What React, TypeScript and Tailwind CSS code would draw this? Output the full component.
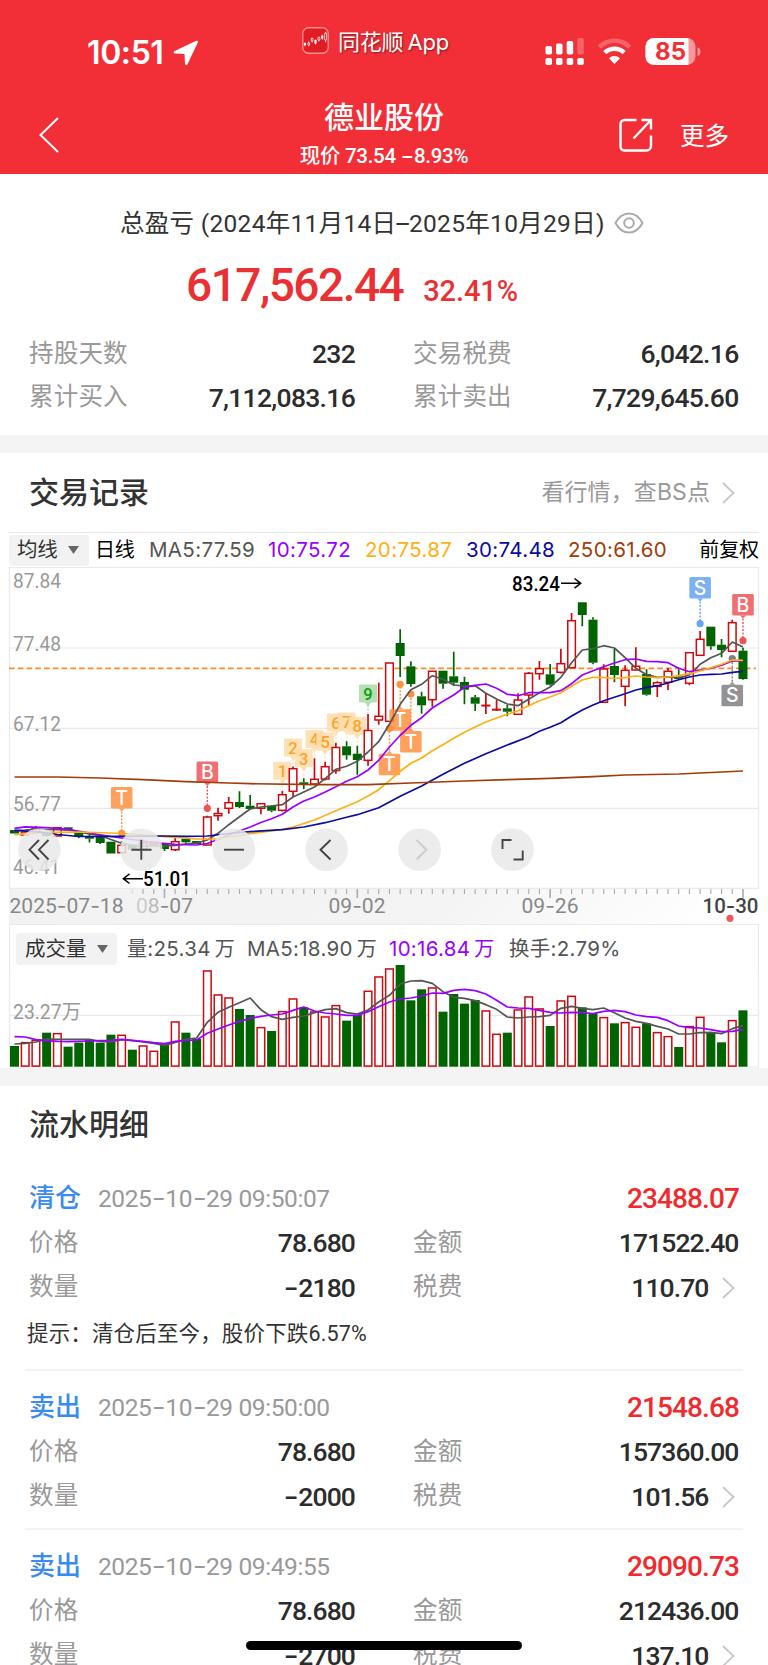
import type { ReactNode } from "react";
import { clsx } from "clsx";

const SANS = "font-['Inter','Noto_Sans_CJK_SC',sans-serif]";
const DIN = "font-['Roboto','Noto_Sans_CJK_SC',sans-serif]";

const RED = "#cc0a0f";
const GREEN = "#006400";
const GRAY = "#555555";
const PURPLE = "#9900ff";
const ORANGE = "#ffb010";
const NAVY = "#0c0ca0";
const BROWN = "#a23c0a";

/** x of the i-th trading day */
const px = (i: number) => 14.5 + i * 10.713;

/** up, body top, body bottom, high, low */
type Candle = [number, number, number, number, number];

const CANDLES: Candle[] = [
  [0, 830, 833.5, 830, 833.5], [1, 832, 835, 832, 835], [1, 828, 832, 826, 833],
  [0, 832, 836, 831, 836.5], [1, 827.7, 836, 827.7, 836], [0, 827.3, 830.5, 827.3, 830.5],
  [0, 833, 837, 833, 838], [0, 836.7, 838.7, 834, 842.5], [0, 836.7, 843, 836, 844],
  [0, 841.7, 853.5, 841.7, 853.5], [1, 845.3, 852.7, 841, 852.7], [0, 844.7, 849.7, 844, 851],
  [1, 843, 849, 843, 849], [1, 842.3, 844.3, 842, 846], [0, 843.3, 849, 843.3, 851],
  [1, 841.7, 849.7, 837.7, 851], [0, 839, 842.3, 839, 844], [0, 841, 844, 841, 844],
  [1, 817, 845, 815.7, 845], [1, 813.5, 815.7, 807.7, 820.7], [1, 802.7, 808.3, 797, 813.7],
  [0, 802, 807, 791.3, 808], [0, 805.7, 809, 795, 809.7], [1, 803.7, 808.3, 803, 814.3],
  [0, 805.7, 810.7, 805, 812.3], [1, 794.7, 810.3, 791, 811.5], [1, 768.7, 791.3, 766.5, 797],
  [0, 782.3, 784, 778.3, 789], [1, 779.3, 784, 758.3, 784], [1, 766.7, 779, 761.7, 780.5],
  [1, 747.5, 770.5, 743, 773.7], [0, 746.3, 755.3, 741.3, 759.7], [0, 753.7, 760, 745.7, 774.7],
  [1, 730.5, 760.3, 714, 765.7], [1, 716.3, 720, 682.7, 724.7], [1, 663, 721.3, 663, 721.5],
  [0, 643, 656, 629.3, 677], [0, 666.3, 684, 661.3, 686.7], [0, 696.3, 705.3, 691.7, 713.7],
  [1, 671.3, 699.7, 671, 706.7], [0, 670.7, 683.7, 670.7, 688.7], [0, 676.3, 682.7, 651.7, 686],
  [0, 682, 689.7, 676.7, 704.3], [0, 697.3, 703.7, 695, 711], [1, 705.3, 705.8, 693, 714],
  [1, 709.4, 709.9, 700, 711], [0, 708.3, 711.7, 705, 716.3], [1, 700, 714.3, 693.3, 714.5],
  [1, 673.3, 695, 672, 706], [1, 668.7, 673.7, 661, 679.7], [0, 674.3, 684.7, 664, 685.5],
  [1, 663.7, 672.3, 648.7, 673.5], [1, 620.7, 667.7, 613, 667.7], [0, 602.3, 615, 602.3, 626.3],
  [0, 619.7, 662.7, 617.3, 664.3], [1, 669, 702.3, 664.3, 703], [0, 666, 675, 648.7, 682.3],
  [1, 670.3, 686.3, 665.3, 706.3], [1, 666.3, 670, 647.3, 670], [0, 674, 694.7, 669.3, 695.7],
  [1, 682.7, 686.3, 681.3, 697], [1, 671.3, 682.3, 668, 690], [0, 676.7, 679, 669.3, 679],
  [1, 652.7, 683.3, 652, 685.3], [1, 639.3, 655.3, 631, 655.5], [0, 626.7, 646.3, 626.7, 649.7],
  [0, 644.7, 650, 639, 657.3], [1, 622.7, 651.3, 619.7, 651.5], [0, 650.7, 679, 647.7, 679.7],
];

type Point = [number, number];

const MA5: Point[] = [
  [0, 830.7], [1, 830], [2, 829], [3, 829.5], [5, 830], [6, 832], [7, 834], [8, 835.5], [9, 839.5],
  [10, 843.3], [11, 845.3], [12, 846], [14, 846], [15, 845.5], [16, 844], [17, 843], [18, 840],
  [19, 833.3], [20, 824.7], [21, 816.7], [22, 809], [23, 807], [24, 806], [25, 804.7], [26, 797],
  [27, 792], [28, 787], [29, 778.7], [30, 769.3], [31, 766.3], [32, 761.3], [33, 752], [34, 741.7],
  [35, 724], [36, 704.3], [37, 689.7], [38, 684.3], [39, 675.7], [40, 679.3], [41, 685], [42, 686],
  [43, 685.7], [44, 693.3], [45, 699], [46, 704], [47, 705.7], [48, 699.3], [49, 692.7], [50, 687],
  [51, 677.3], [52, 662.7], [53, 650], [54, 648.7], [55, 645.7], [56, 648], [57, 657.7], [58, 668.3],
  [59, 674.7], [60, 677.3], [61, 677], [62, 677.7], [63, 675], [64, 664.3], [65, 657.7], [66, 653.3],
  [67, 642], [68, 647],
];

const MA10: Point[] = [
  [0, 828.3], [1, 826.9], [3, 827.7], [5, 829.3], [7, 833], [9, 836.5], [11, 839.5], [13, 842.5],
  [15, 844.3], [17, 845], [18, 843.5], [19, 839.5], [20, 835], [21, 831], [22, 827], [23, 822.5],
  [24, 818.7], [25, 814.3], [26, 807], [27, 801], [28, 797], [29, 792], [30, 786.7], [31, 781.3],
  [32, 776.7], [33, 770], [34, 760.3], [35, 747], [36, 735.3], [37, 725.3], [38, 717.7], [39, 708],
  [40, 701.3], [41, 695], [42, 687.3], [43, 685.3], [44, 684], [45, 688.3], [46, 694.3], [47, 695.7],
  [48, 692.7], [50, 692.7], [51, 690.7], [52, 683.7], [53, 675], [54, 670.7], [55, 666.7], [56, 663],
  [57, 659.7], [58, 659], [59, 661.3], [60, 661.7], [61, 662.7], [62, 668.3], [63, 671.7], [64, 670],
  [65, 668.3], [66, 665.3], [67, 661], [68, 661],
];

const MA20: Point[] = [
  [0, 834.7], [3, 832.3], [6, 832], [9, 833], [11, 834], [14, 836.7], [17, 839], [19, 838.8],
  [21, 835.7], [22, 833.7], [24, 831], [25, 829.3], [26, 827], [28, 820], [30, 810.7], [32, 801.7],
  [33, 796], [34, 789.7], [35, 780.7], [36, 771.3], [37, 763.3], [38, 758], [39, 750.7], [40, 744.7],
  [41, 738.3], [42, 732.3], [43, 727], [44, 722], [45, 718], [46, 714.3], [47, 710.7], [48, 705.7],
  [49, 700.7], [50, 697], [51, 692.7], [52, 686], [53, 680], [54, 677.3], [55, 677.5], [56, 678.5],
  [57, 677.7], [58, 676], [59, 677], [60, 677.7], [61, 677], [62, 675.7], [63, 673.7], [64, 671],
  [65, 667.7], [66, 664.3], [67, 660], [68, 660.3],
];

const MA30: Point[] = [
  [0, 830.3], [2, 831.7], [4, 834.5], [6, 836.5], [10, 836.3], [14, 836], [16, 836.3], [18, 836],
  [20, 833.5], [22, 831.7], [25, 829.7], [27, 827], [29, 822.7], [31, 817.3], [32, 814.7],
  [33, 811.3], [34, 807.7], [36, 796.3], [38, 786], [40, 774.3], [42, 763.3], [44, 753.7],
  [46, 745], [48, 736.7], [49, 731.3], [50, 727.3], [51, 722.7], [52, 716], [53, 710], [54, 705],
  [55, 700.7], [56, 697.3], [57, 693.7], [58, 690], [59, 687.7], [60, 685.7], [61, 683], [62, 679.7],
  [63, 677], [64, 675], [65, 674.3], [66, 674], [67, 672.3], [68, 671.3],
];

const MA250: Point[] = [
  [0, 777], [4, 777], [8, 778], [12, 779.7], [16, 781.7], [20, 783], [22, 783.7], [28, 784.7],
  [33, 784.7], [37, 783], [42, 781], [46, 779.7], [50, 778.3], [54, 776.7], [57, 775], [62, 774],
  [66, 772], [68, 771],
];

// volume series are kept at 3x device pixels, measured from y = 900
const VOLUMES = [
  438, 427, 420, 398, 400, 440, 428, 420, 428, 404, 405, 449, 437, 453, 432, 365, 398, 417, 212, 284,
  293, 327, 345, 382, 393, 334, 296, 322, 335, 350, 316, 362, 344, 273, 230, 206, 195, 301, 268, 263,
  335, 282, 311, 300, 332, 402, 398, 329, 290, 326, 378, 302, 288, 322, 340, 352, 370, 367, 381, 370,
  397, 409, 441, 379, 351, 397, 427, 361, 331,
];
const VOL_MA5 = [
  432, 430, 426, 417, 418, 418, 418, 418, 424, 426, 419, 422, 426, 430, 436, 427, 418, 414, 367, 337,
  322, 308, 294, 329, 350, 358, 352, 348, 338, 329, 326, 338, 342, 330, 306, 286, 252, 243, 242, 250,
  275, 292, 295, 302, 314, 328, 351, 354, 351, 350, 346, 325, 319, 325, 329, 324, 338, 354, 364, 370,
  379, 387, 402, 402, 398, 397, 401, 386, 377,
];
const VOL_MA10 = [
  410, 411, 419, 422, 424, 425, 424, 423, 422, 421, 418, 421, 424, 428, 431, 424, 421, 420, 400, 387,
  375, 364, 355, 349, 345, 342, 331, 321, 333, 339, 342, 346, 346, 335, 320, 306, 297, 294, 288, 279,
  280, 271, 268, 272, 282, 301, 321, 324, 325, 331, 337, 339, 337, 338, 341, 334, 331, 335, 345, 350,
  352, 362, 378, 383, 384, 389, 395, 394, 388,
];
const volY = (v: number) => 900 + v / 3;

/** day, letter, colour, box top, dot y */
const MARKS: [number, string, string, number, number][] = [
  [10, "T", "#ff9040", 787, 833.3],
  [18, "B", "#ee5558", 761.5, 808.3],
  [35, "T", "#ff9040", 753.7, 728.3],
  [36, "T", "#ff9040", 709.3, 684.3],
  [37, "T", "#ff9040", 731, 694],
  [64, "S", "#66a5f0", 577, 623.7],
  [67, "S", "#808080", 684.7, 658.5],
  [68, "B", "#ee5558", 594, 640.7],
];

/** day, label, box top, stem end */
const COUNTS: [number, string, number, number][] = [
  [25, "1", 762.3, 791], [26, "2", 739, 766], [27, "3", 749.7, 778], [28, "4", 730.3, 758],
  [29, "5", 733, 761], [30, "6", 714, 743], [31, "7", 713, 741], [32, "8", 717.3, 745],
  [33, "9", 685, 713],
];

function toLine(points: Point[]) {
  return points.map(([i, y]) => `${px(i).toFixed(1)},${y}`).join(" ");
}

/** Digits in Roboto, with a wider hyphen between them */
function Num({ children }: { children: string }) {
  return (
    <>
      {children.split(/(-)/).map((part, i) =>
        part === "-" ? (
          <span key={i} className="mx-[1.5px] inline-block scale-x-125 font-['Inter']">-</span>
        ) : (
          part
        )
      )}
    </>
  );
}

function SvgText({
  x,
  y,
  w,
  size = 20.5,
  fill = "#999",
  weight = 400,
  children,
}: {
  x: number;
  y: number;
  w: number;
  size?: number;
  fill?: string;
  weight?: number;
  children: ReactNode;
}) {
  return (
    <text x={x} y={y} textLength={w} lengthAdjust="spacingAndGlyphs" fontSize={size} fill={fill} fontWeight={weight}>
      {children}
    </text>
  );
}

function Dash() {
  return <tspan className="font-['Inter']">-</tspan>;
}

function Chevron({ className }: { className?: string }) {
  return (
    <svg viewBox="0 0 13 22" className={clsx("h-[22px] w-[13px] shrink-0", className)} fill="none" stroke="#c8c8c8" strokeWidth="1.8">
      <path d="M1 1 L11.5 11 L1 21" />
    </svg>
  );
}

function StatusBar() {
  return (
    <div className="flex h-[92px] text-white">
      <div className="flex w-[302px] items-center pt-[14px] pl-[87px]">
        <span className="w-[80px] font-['Inter'] text-[32px] font-semibold tracking-[-0.4px]">10:51</span>
        <svg viewBox="0 0 26 26" className="ml-[6px] h-[26px] w-[26px]" fill="#fff">
          <path d="M23.2 .8 L1.2 11.2 Q-.4 12.6 1.5 13.4 L11.5 13.9 L12 24 Q13 26.2 14.4 24.4 L24.8 2.4 Q25.4 .2 23.2 .8Z" />
        </svg>
      </div>
      <div className="flex w-[243px] items-start pt-[27px]">
        <svg viewBox="0 0 28 28" className="h-[27px] w-[27px]" fill="none">
          <rect x=".8" y=".8" width="26.4" height="26.4" rx="6" fill="#e01c24" stroke="#ff8d90" strokeWidth="1.4" />
          <path d="M3 16v4M7 15v5M10.5 11v5M14 13v5M17.5 10v5M21 8v5M24.5 5v11" stroke="#fff" strokeWidth=".9" />
          <path d="M3 16.5v2.5M14 13.5v3.5M21 9v3" stroke="#fff" strokeWidth="2.2" />
          <path d="M6 16.5h2v2h-2zM9.5 12h2v2.5h-2zM16.5 11h2v2.5h-2zM23.5 6.5h2v7h-2z" fill="#e01c24" stroke="#fff" strokeWidth=".7" />
        </svg>
        <span className={clsx(SANS, "mt-px ml-[9px] text-[22px] leading-[28px] tracking-[-0.2px] whitespace-nowrap [text-shadow:1px_1px_2px_rgba(0,0,0,0.45)]")}>
          同花顺<span className="ml-1">App</span>
        </span>
      </div>
      <svg viewBox="545 36 160 32" className="mt-[36px] h-[32px] w-[160px]" fill="#fff">
        <rect x="545.5" y="46" width="6.5" height="8.5" rx="1.8" />
        <rect x="556" y="43.5" width="6.5" height="11" rx="1.8" />
        <rect x="566.7" y="41" width="6.5" height="13.5" rx="1.8" />
        <rect x="577.3" y="38" width="6.5" height="16.5" rx="1.8" opacity=".25" />
        <rect x="545.5" y="58" width="6.5" height="7" rx="1.8" />
        <rect x="556" y="58" width="6.5" height="7" rx="1.8" />
        <rect x="566.7" y="58" width="6.5" height="7" rx="1.8" />
        <rect x="577.3" y="58" width="6.5" height="7" rx="1.8" />
        <g fill="none" stroke="#fff" strokeWidth="4.6">
          <path d="M599.3 47a21.5 21.5 0 0 1 30.4 0" opacity=".25" />
          <path d="M604.8 52.6a14 14 0 0 1 19.4 0" />
        </g>
        <path d="M609 58.2a8 8 0 0 1 11 0L614.5 64z" />
        <rect x="645.5" y="38" width="50" height="27" rx="8.5" opacity=".5" />
        <path d="M654 38h34.500v27H654a8.500 8.500 0 0 1-8.500-8.500v-10a8.500 8.500 0 0 1 8.500-8.500z" />
        <path d="M697.500 47.500c4 1 4 7.500 0 8.500z" opacity=".5" />
        <text x="655" y="60.3" fontSize="24" fontWeight="700" fill="#f22f37" textLength="31" lengthAdjust="spacingAndGlyphs" className="font-['Inter']">
          85
        </text>
      </svg>
    </div>
  );
}

function NavBar() {
  return (
    <div className={clsx(DIN, "flex h-[82px] text-white")}>
      <div className="w-[240px] pt-[25px] pl-[39px]">
        <svg viewBox="0 0 20 36" className="h-[36px] w-[20px]" fill="none" stroke="#fff" strokeWidth="2">
          <path d="M19 1 L1.5 18 L19 35" />
        </svg>
      </div>
      <div className="flex w-[288px] flex-col items-center pt-[8px]">
        <h1 className="text-[30px] leading-[36px] font-medium">德业股份</h1>
        <p className="mt-[7px] text-[20.5px] leading-[26px] font-medium tracking-[-0.3px]">
          现价 73.54 <span className="font-['Inter']">−</span>8.93%
        </p>
      </div>
      <div className="flex grow items-start pt-[26px] pl-[91px]">
        <svg viewBox="0 0 34 34" className="h-[34px] w-[34px]" fill="none" stroke="#fff" strokeWidth="2.4">
          <path d="M17.500 2H5.500a4 4 0 0 0-4 4v22.500a4 4 0 0 0 4 4h22a4.500 4.500 0 0 0 4.500-4.500V17.500" />
          <path d="M22.500 2H32v9.500M32 2 14.500 20.500" />
        </svg>
        <span className="ml-[27px] text-[24.5px] leading-[38px]">更多</span>
      </div>
    </div>
  );
}

function StatRow({ items }: { items: [string, string, string, string] }) {
  return (
    <div className="grid h-[43.5px] grid-cols-[100px_226px_58px_100px_225.5px] items-center text-[24.5px] tracking-[0.2px] text-[#999]">
      <span>{items[0]}</span>
      <span className="text-right text-[26.5px] font-medium tracking-[-0.7px] text-[#2c2c2c]">{items[1]}</span>
      <span />
      <span>{items[2]}</span>
      <span className="text-right text-[26.5px] font-medium tracking-[-0.7px] text-[#2c2c2c]">{items[3]}</span>
    </div>
  );
}

function Summary() {
  return (
    <section className={clsx(DIN, "h-[261px] bg-white pt-[32px]")}>
      <div className="flex h-[36px] items-center pl-[120px] text-[#333]">
        <span className="text-[24.5px] tracking-[0.3px] whitespace-nowrap">
          总盈亏 (2024年11月14日<span className="font-['Inter']">–</span>2025年10月29日)
        </span>
        <svg viewBox="0 0 30 22" className="mt-[-3px] ml-[9px] h-[22px] w-[30px]" fill="none" stroke="#aaa" strokeWidth="2">
          <path d="M1.500 11C5 4.500 9.500 1.500 15 1.500S25 4.500 28.500 11C25 17.500 20.500 20.500 15 20.500S5 17.500 1.500 11Z" />
          <circle cx="15" cy="11" r="4.8" />
        </svg>
      </div>
      <div className="flex h-[83px] items-baseline pl-[186px] text-[#ea3033]">
        <span className="text-[46px] leading-[86px] font-medium tracking-[-1.5px]">617,562.44</span>
        <span className="ml-[20px] text-[29px] font-medium tracking-[-0.1px]">32.41%</span>
      </div>
      <div className="mt-[7.5px] pl-[29px]">
        <StatRow items={["持股天数", "232", "交易税费", "6,042.16"]} />
        <StatRow items={["累计买入", "7,112,083.16", "累计卖出", "7,729,645.60"]} />
      </div>
    </section>
  );
}

function Dropdown({ label, className }: { label: string; className: string }) {
  return (
    <span className={clsx("flex items-center rounded bg-[#f2f2f2] text-[20.5px] text-[#333]", className)}>
      {label}
      <svg viewBox="0 0 11 8" className="ml-[10px] h-[8px] w-[11px]" fill="#666">
        <path d="M0 0h11L5.500 8z" />
      </svg>
    </span>
  );
}

function Legend() {
  return (
    <div className={clsx(SANS, "mx-[9px] flex h-[35px] items-center border-t border-[#e8e8e8] text-[20.5px] tracking-[0.35px] whitespace-nowrap")}>
      <Dropdown label="均线" className="h-[31px] w-[80px] pl-[8px] tracking-[-0.2px]" />
      <span className="w-[60px] pl-[6px] text-[20px] tracking-[-0.3px] text-black">日线</span>
      <span className="w-[119px] text-[#555]">MA5:77.59</span>
      <span className="w-[97px] text-[#9900ff]">10:75.72</span>
      <span className="w-[101px] text-[#ffb010]">20:75.87</span>
      <span className="w-[102px] text-[#0c0ca0]">30:74.48</span>
      <span className="grow text-[#a23c0a]">250:61.60</span>
      <span className="text-[20px] tracking-[-0.1px] text-black">前复权</span>
    </div>
  );
}

function PriceChart() {
  const ticks = Array.from({ length: 58 }, (_, k) => k + 11);
  const majors = [14, 32, 50, 68];

  return (
    <svg viewBox="0 567 768 358" className={clsx(DIN, "block h-[358px] w-[768px]")}>
      <defs>
        <linearGradient id="axis" x1="0" y1="0" x2="1" y2="0.05">
          <stop offset="0" stopColor="#f2f2f2" />
          <stop offset=".6" stopColor="#f4f4f4" />
          <stop offset="1" stopColor="#fff" />
        </linearGradient>
      </defs>
      <rect x="9" y="888" width="750" height="36" fill="url(#axis)" />
      <g stroke="#e9e9e9" strokeWidth="1.2">
        {[567.5, 648, 728.3, 808.3, 888.3, 924.5].map((y) => (
          <line key={y} x1="9" x2="759" y1={y} y2={y} />
        ))}
        <path d="M9.500 567V888M758.500 567V888" />
      </g>
      <line x1="9" x2="756" y1="668.3" y2="668.3" stroke="#ff8a2a" strokeWidth="1.8" strokeDasharray="5.7 3.06" />

      <SvgText x={13} y={588.3} w={48}>87.84</SvgText>
      <SvgText x={13} y={650.7} w={48}>77.48</SvgText>
      <SvgText x={13} y={730.7} w={48}>67.12</SvgText>
      <SvgText x={13} y={811.3} w={48}>56.77</SvgText>
      <SvgText x={13} y={873.7} w={47}>46.41</SvgText>

      {/* day counter badges */}
      {COUNTS.map(([i, label, top, end]) => {
        const green = label === "9";
        return (
          <g key={label}>
            <path
              d={`M${px(i)} ${top + 20}V${end}`}
              stroke={green ? "#b5e0b5" : "#ffe3bd"}
              strokeWidth="1.5"
              strokeDasharray="2 1.5"
            />
            <path
              d={`M${px(i) - 8.5} ${top}h17v17h-5.500l-3 4-3-4h-5.500z`}
              fill={green ? "#a8dba8" : "#ffdcab"}
              stroke={green ? "#a8dba8" : "#ffdcab"}
              strokeLinejoin="round"
              opacity=".85"
            />
            <text x={px(i)} y={top + 15} fontSize="16.5" fontWeight="500" textAnchor="middle" fill={green ? "#0f9d0f" : "#f8a42c"}>
              {label}
            </text>
          </g>
        );
      })}

      {CANDLES.map(([up, top, bottom, high, low], i) => {
        const color = up ? RED : GREEN;
        return (
          <g key={i} stroke={color} strokeWidth="1.5">
            <path d={`M${px(i)} ${high}V${top}M${px(i)} ${bottom}V${low}`} strokeWidth="1.7" />
            {up ? (
              <rect x={px(i) - 3.8} y={top} width="7.6" height={bottom - top} fill="#fff" />
            ) : (
              <rect x={px(i) - 4.5} y={top} width="9" height={bottom - top} fill={color} stroke="none" />
            )}
          </g>
        );
      })}

      {MARKS.map(([i, letter, color, top, dot]) => {
        const below = top > dot;
        const edge = below ? top : top + 21.5;
        const tip = below ? edge - 3 : edge + 3;
        return (
          <g key={i} fill={color}>
            <rect x={px(i) - 10.8} y={top} width="21.6" height="21.5" rx="1.5" opacity=".85" />
            <path d={`M${px(i) - 3} ${edge}L${px(i)} ${tip}L${px(i) + 3} ${edge}Z`} opacity=".85" />
            <line x1={px(i)} x2={px(i)} y1={tip} y2={dot} stroke={color} strokeWidth="1.4" strokeDasharray="2 1.5" />
            <circle cx={px(i)} cy={dot} r="3.6" />
            <text x={px(i)} y={top + 17.7} fontSize="19.5" fontWeight="500" textAnchor="middle" fill="#fff" className="font-['Inter']">
              {letter}
            </text>
          </g>
        );
      })}

      <g fill="none" strokeWidth="1.7" strokeLinejoin="round">
        <polyline points={toLine(MA5)} stroke={GRAY} />
        <polyline points={toLine(MA10)} stroke={PURPLE} />
        <polyline points={toLine(MA20)} stroke={ORANGE} />
        <polyline points={toLine(MA30)} stroke={NAVY} />
        <polyline points={toLine(MA250)} stroke={BROWN} />
      </g>

      {/* extremes */}
      <g fill="none" stroke="#000" strokeWidth="1.5">
        <path d="M561 583.300H580.500M574.500 578.500L580.700 583.300L574.500 588.100" />
        <path d="M143 878.700H123.500M129.500 873.900L123.300 878.700L129.500 883.500" />
      </g>
      <SvgText x={512} y={590.5} w={48} size={21} fill="#000" weight={500}>83.24</SvgText>
      <SvgText x={143} y={886.3} w={48} size={21} fill="#000" weight={500}>51.01</SvgText>

      {/* time axis */}
      {ticks.map((i) => (
        <line
          key={i}
          x1={px(i)}
          x2={px(i)}
          y1="889"
          y2={majors.includes(i) ? 898 : 894}
          stroke={i < 12 ? "#ddd" : "#aaa"}
          strokeWidth={majors.includes(i) ? 1.6 : 1.1}
        />
      ))}
      <SvgText x={9.5} y={913} w={114} fill="#888">
        2025<Dash />07<Dash />18
      </SvgText>
      <SvgText x={136} y={913} w={57} fill="#888">
        <tspan fill="#ccc">0</tspan>
        <tspan fill="#bbb">8</tspan>
        <Dash />07
      </SvgText>
      <SvgText x={328.5} y={913} w={57} fill="#888">
        09<Dash />02
      </SvgText>
      <SvgText x={521.5} y={913} w={57} fill="#888">
        09<Dash />26
      </SvgText>
      <SvgText x={702.5} y={913} w={56} fill="#444" weight={500}>
        10<Dash />30
      </SvgText>
      <circle cx="730" cy="918.3" r="3.6" fill="#f5585c" />

      {/* zoom and pan buttons */}
      <g fill="#e9e9e9" opacity=".85">
        {[39.3, 141.3, 234, 326.7, 419.7, 512.5].map((cx) => (
          <circle key={cx} cx={cx} cy="849.7" r="21.3" />
        ))}
      </g>
      <g fill="none" stroke="#444" strokeWidth="1.9">
        <path d="M39 840L29.500 849.700L39 859.500M48.500 840L39 849.700L48.500 859.500" />
        <path d="M131.500 849.700H151.500M141.300 839.700V859.700" />
        <path d="M224 849.700H244" />
        <path d="M330.500 840L320.500 849.700L330.500 859.500" />
        <path d="M416.500 840L426.500 849.700L416.500 859.500" stroke="#ccc" />
        <path d="M502.500 849V840H511.500M522.700 850.500V859.500H513.500" />
      </g>
    </svg>
  );
}

function VolumePanel() {
  return (
    <div className="h-[143px]">
      <div className={clsx(SANS, "ml-[9px] flex h-[48px] w-[750px] items-center border-x border-[#e9e9e9] pl-[6px] text-[20.5px] tracking-[0.3px] whitespace-nowrap")}>
        <Dropdown label="成交量" className="h-[32px] w-[101px] pl-[9px] tracking-[0px]" />
        <span className="w-[130px] pl-[10px] text-[#555]">
          <span className="text-[20px]">量</span>:25.34<span className="ml-1 text-[20px]">万</span>
        </span>
        <span className="w-[142px] text-[#555]">
          MA5:18.90<span className="ml-1 text-[20px]">万</span>
        </span>
        <span className="w-[120px] text-[#9900ff]">
          10:16.84<span className="ml-1 text-[20px]">万</span>
        </span>
        <span className="text-[#555]">换手:2.79%</span>
      </div>
      <svg viewBox="0 973 768 95" className={clsx(DIN, "block h-[95px] w-[768px] overflow-visible")}>
        <path d="M9.500 973V1067M758.500 973V1067M9 1015.300H759M9 1067H759" stroke="#e9e9e9" strokeWidth="1.2" />
        <SvgText x={13} y={1018.5} w={68}>23.27万</SvgText>
        {VOLUMES.map((v, i) => {
          const y = volY(v);
          return CANDLES[i][0] ? (
            <rect key={i} x={px(i) - 3.8} y={y + 0.3} width="7.6" height={1065.8 - y} fill="#fff" stroke={RED} strokeWidth="1.5" />
          ) : (
            <rect key={i} x={px(i) - 4.5} y={y} width="9" height={1066.7 - y} fill={GREEN} />
          );
        })}
        <g fill="none" strokeWidth="1.7" strokeLinejoin="round">
          <polyline points={toLine(VOL_MA5.map((v, i) => [i, volY(v)]))} stroke={GRAY} />
          <polyline points={toLine(VOL_MA10.map((v, i) => [i, volY(v)]))} stroke={PURPLE} />
        </g>
      </svg>
    </div>
  );
}

interface Trade {
  kind: string;
  time: string;
  profit: string;
  price: string;
  amount: string;
  count: string;
  fee: string;
  tip?: string;
}

const TRADES: Trade[] = [
  {
    kind: "清仓",
    time: "2025-10-29 09:50:07",
    profit: "23488.07",
    price: "78.680",
    amount: "171522.40",
    count: "-2180",
    fee: "110.70",
    tip: "提示：清仓后至今，股价下跌6.57%",
  },
  {
    kind: "卖出",
    time: "2025-10-29 09:50:00",
    profit: "21548.68",
    price: "78.680",
    amount: "157360.00",
    count: "-2000",
    fee: "101.56",
  },
  {
    kind: "卖出",
    time: "2025-10-29 09:49:55",
    profit: "29090.73",
    price: "78.680",
    amount: "212436.00",
    count: "-2700",
    fee: "137.10",
  },
];

function TradeItem({ trade }: { trade: Trade }) {
  const value = "text-right text-[26.5px] font-medium tracking-[-0.9px] text-[#2c2c2c]";
  return (
    <li className="mx-[25px] border-b-2 border-[#f3f3f3] pt-[14px] pb-[9px]">
      <div className="flex h-[45px] items-center pr-[4px] pl-[4px]">
        <span className="w-[69px] text-[26px] font-medium text-[#3a8bf0]">{trade.kind}</span>
        <span className="text-[24.5px] tracking-[-0.4px] text-[#999]">
          <Num>{trade.time}</Num>
        </span>
        <span className="ml-auto text-[28px] font-medium tracking-[-0.9px] text-[#f02a2d]">{trade.profit}</span>
      </div>
      <div className="grid h-[89px] grid-cols-[100px_226px_58px_100px_225.5px] grid-rows-2 items-center pl-[4px] text-[24.5px] tracking-[0.2px] text-[#999]">
        <span>价格</span>
        <span className={value}>{trade.price}</span>
        <span />
        <span>金额</span>
        <span className={value}>{trade.amount}</span>
        <span>数量</span>
        <span className={value}>
          <Num>{trade.count}</Num>
        </span>
        <span />
        <span>税费</span>
        <span className={clsx(value, "flex items-center justify-end")}>
          {trade.fee}
          <Chevron className="mr-[4px] ml-[13px]" />
        </span>
      </div>
      {trade.tip && (
        <p className="mb-[2px] flex h-[48px] items-center pt-px pl-[2px] text-[21.5px] tracking-[0.15px] text-[#333]">{trade.tip}</p>
      )}
    </li>
  );
}

export default function App() {
  return (
    <div className="relative h-[1665px] w-[768px] overflow-hidden bg-white">
      <header className="h-[174px] bg-[#f22f37]">
        <StatusBar />
        <NavBar />
      </header>
      <Summary />
      <div className="h-[18px] bg-[#f4f4f4]" />

      <section className={DIN}>
        <div className="flex h-[79px] items-center pr-[33px] pl-[29px]">
          <h2 className="text-[30px] font-medium text-[#333]">交易记录</h2>
          <span className={clsx(SANS, "ml-auto text-[23px] tracking-[0.1px] text-[#999]")}>看行情，查BS点</span>
          <Chevron className="ml-[12px]" />
        </div>
        <Legend />
        <PriceChart />
        <VolumePanel />
      </section>
      <div className="h-[18px] bg-[#f4f4f4]" />

      <section className={DIN}>
        <h2 className="flex h-[76px] items-center pt-px pl-[29px] text-[30px] font-medium text-[#333]">流水明细</h2>
        <ul>
          {TRADES.map((trade) => (
            <TradeItem key={trade.time} trade={trade} />
          ))}
        </ul>
      </section>

      {/* home indicator */}
      <div className="absolute top-[1641px] left-[246px] h-[9px] w-[276px] rounded-full bg-black" />
    </div>
  );
}
